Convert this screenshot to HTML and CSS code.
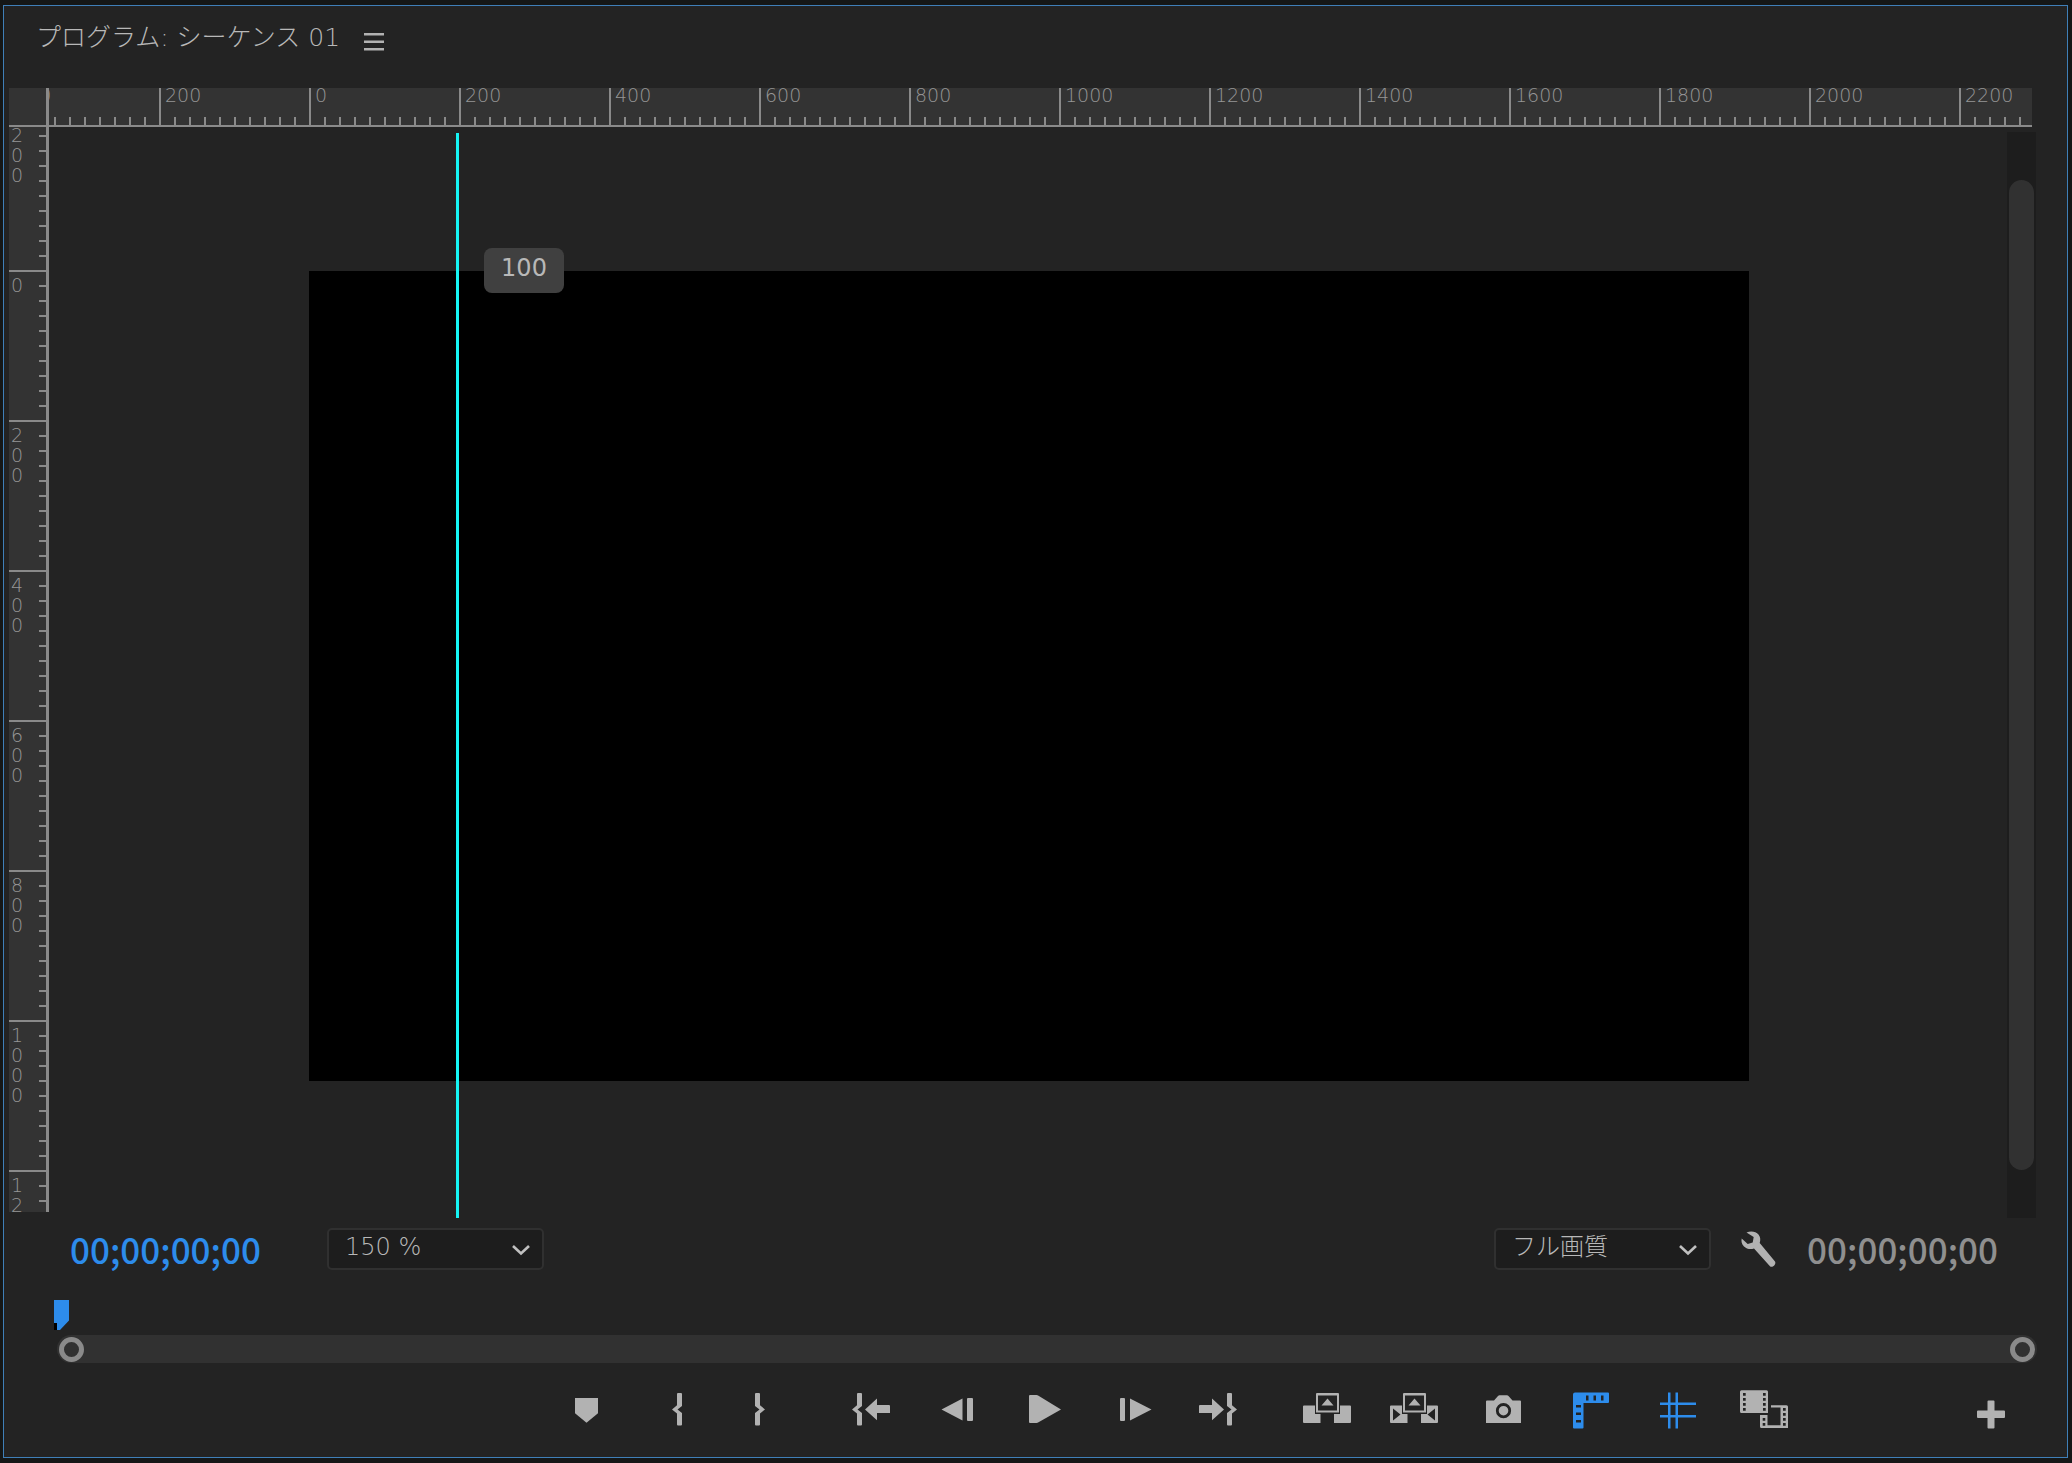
FILE: index.html
```html
<!DOCTYPE html>
<html lang="ja">
<head>
<meta charset="utf-8">
<title>プログラム: シーケンス 01</title>
<link rel="stylesheet" href="styles.css">
</head>
<body>
<main class="panel">
  <header class="panel-header">
    <h1 class="panel-title">プログラム: シーケンス 01</h1>
    <button class="icon-button menu-button" type="button" aria-label="パネルメニュー">
      <svg width="20" height="20" viewBox="0 0 20 20"><path d="M0 1h20v2.500H0zM0 8.500h20V11H0zM0 16h20v2.500H0z"/></svg>
    </button>
  </header>

  <section class="workspace">
    <div class="corner"></div>
    <div class="ruler ruler-h">
      <div class="strip strip-h">
        <span class="mark">400</span><span class="mark">200</span><span class="mark">0</span><span class="mark">200</span><span class="mark">400</span><span class="mark">600</span><span class="mark">800</span><span class="mark">1000</span><span class="mark">1200</span><span class="mark">1400</span><span class="mark">1600</span><span class="mark">1800</span><span class="mark">2000</span><span class="mark">2200</span>
      </div>
    </div>
    <div class="ruler ruler-v">
      <div class="strip strip-v">
        <span class="mark"><span class="digits">200</span></span>
        <span class="mark"><span class="digits">0</span></span>
        <span class="mark"><span class="digits">200</span></span>
        <span class="mark"><span class="digits">400</span></span>
        <span class="mark"><span class="digits">600</span></span>
        <span class="mark"><span class="digits">800</span></span>
        <span class="mark"><span class="digits">1000</span></span>
        <span class="mark"><span class="digits">1200</span></span>
      </div>
    </div>
    <div class="stage">
      <div class="frame"></div>
      <div class="guide"></div>
      <div class="guide-value">100</div>
    </div>
    <div class="scrollbar"><div class="thumb"></div></div>
  </section>

  <section class="controls">
    <input class="timecode timecode-current" type="text" value="00;00;00;00" aria-label="再生ヘッドの位置">
    <div class="dropdown">
      <select aria-label="ズームレベル"><option>150 %</option></select>
      <svg class="chevron" width="20" height="12" viewBox="0 0 20 12"><path d="M2 2l8 7.500L18 2"/></svg>
    </div>
    <div class="controls-end">
      <div class="dropdown">
        <select aria-label="再生時の解像度"><option>フル画質</option></select>
        <svg class="chevron" width="20" height="12" viewBox="0 0 20 12"><path d="M2 2l8 7.500L18 2"/></svg>
      </div>
      <button class="icon-button" type="button" aria-label="設定">
        <svg width="36" height="38" viewBox="0 0 36 38"><path d="M5.500 2.500C10 .500 15 1.500 17.500 4.500c2 2.500 2.200 5.500 1.200 8.500L34 31.500c1.500 2.500-2 6.500-4.800 5L13 18.500c-3.500 1.200-7.500.500-10-2C.800 14.200 0 11.500.700 8.500l6 5.500 5-1.500 1-5.500z"/></svg>
      </button>
      <output class="timecode" aria-label="デュレーション">00;00;00;00</output>
    </div>
  </section>

  <section class="timeline">
    <svg class="playhead" width="15" height="30" viewBox="0 0 15 30"><path class="head-shadow" d="M0 20h4v10H0z"/><path d="M0 0h15v20.500L6 30H3v-7H0z"/></svg>
    <div class="zoombar"><span class="knob"></span><span class="knob"></span></div>
  </section>

  <nav class="toolbar" aria-label="トランスポート">
    <div class="tools">
      <div class="tool-group">
        <button class="icon-button" type="button" aria-label="マーカーを追加"><svg width="48" height="42" viewBox="0 0 48 42"><path d="M10 10h23v15.300L21.500 34.700 10 25.300z"/></svg></button>
        <button class="icon-button" type="button" aria-label="インをマーク"><svg width="48" height="42" viewBox="0 0 48 42"><path d="M26 5h3q1 0 1 1v12l-4.500 3.400L30 25v11.500q0 1-1 1h-3q-1 0-1-1v-11l-5-4.100 5-4.100V6q0-1 1-1z"/></svg></button>
        <button class="icon-button" type="button" aria-label="アウトをマーク"><svg width="48" height="42" viewBox="0 0 48 42"><path d="M20 5h-3q-1 0-1 1v12l4.500 3.400L16 25v11.500q0 1 1 1h3q1 0 1-1v-11l5-4.100-5-4.100V6q0-1-1-1z"/></svg></button>
      </div>
      <div class="tool-group">
        <button class="icon-button" type="button" aria-label="インへ移動"><svg width="48" height="42" viewBox="0 0 48 42"><path d="M11 5h3q1 0 1 1v12l-4.500 3.400L15 25v11.500q0 1-1 1h-3q-1 0-1-1v-11l-5-4.100 5-4.100V6q0-1 1-1zM18 21.400L30 10.500V17h12q1 0 1 1v7H30v7.300z"/></svg></button>
        <button class="icon-button" type="button" aria-label="1フレーム前へ戻る"><svg width="48" height="42" viewBox="0 0 48 42"><path d="M7.500 21.500l21-11v22zM34 10h4q1 0 1 1v21q0 1-1 1h-4q-1 0-1-1V11q0-1 1-1z"/></svg></button>
        <button class="icon-button" type="button" aria-label="再生"><svg width="48" height="42" viewBox="0 0 48 42"><path d="M9 7h6.500q1 0 2 .700L40 21.400 17.500 34.300q-1 .700-2 .700H9q-1 0-1-1V8q0-1 1-1z"/></svg></button>
        <button class="icon-button" type="button" aria-label="1フレーム先へ進む"><svg width="48" height="42" viewBox="0 0 48 42"><path d="M43.500 21.500l-21.500-11v22zM13 10h3q1 0 1 1v21q0 1-1 1h-3q-1 0-1-1V11q0-1 1-1z"/></svg></button>
        <button class="icon-button" type="button" aria-label="アウトへ移動"><svg width="48" height="42" viewBox="0 0 48 42"><path d="M36 5h-3q-1 0-1 1v12l4.500 3.400L32 25v11.500q0 1 1 1h3q1 0 1-1v-11l5-4.100-5-4.100V6q0-1-1-1zM29 21.400L17 10.500V17H5q-1 0-1 1v7h13v7.300z"/></svg></button>
      </div>
      <div class="tool-group">
        <button class="icon-button" type="button" aria-label="リフト"><svg width="48" height="42" viewBox="0 0 48 42"><path d="M1 17.500h11V26h5.500v9H1q-1 0-1-1V18.500q0-1 1-1zM47 17.500H37V26h-6v9h16q1 0 1-1V18.500q0-1-1-1z"/><path fill-rule="evenodd" d="M14 5h21q1 0 1 1v18.500H13V6q0-1 1-1zM15 7.500v15h19v-15zM18.500 17.500l6-7 6 7z"/></svg></button>
        <button class="icon-button" type="button" aria-label="抽出"><svg width="48" height="42" viewBox="0 0 48 42"><path fill-rule="evenodd" d="M1 17.500h11V26h5.500v9H1q-1 0-1-1V18.500q0-1 1-1zM3 20.500v12l7.500-6zM47 17.500H37V26h-6v9h16q1 0 1-1V18.500q0-1-1-1zM45 20.500v12l-7.500-6z"/><path fill-rule="evenodd" d="M14 5h21q1 0 1 1v18.500H13V6q0-1 1-1zM15 7.500v15h19v-15zM18.500 17.500l6-7 6 7z"/></svg></button>
        <button class="icon-button" type="button" aria-label="フレームを書き出し"><svg width="48" height="42" viewBox="0 0 48 42"><path d="M10 12.500h7l4-4.500q.700-.800 1.500-.800h7.500q.800 0 1.500.800l4 4.500H43q1 0 1 1V35H9V13.500q0-1 1-1z"/><circle class="cutout" cx="26.500" cy="22.700" r="6.200"/></svg></button>
        <button class="icon-button active" type="button" aria-label="定規を表示" aria-pressed="true"><svg width="48" height="42" viewBox="0 0 48 42"><path fill-rule="evenodd" d="M11 4.500h33q1 0 1 1V14q0 1-1 1H19.500v24.500q0 1-1 1H10q-1 0-1-1v-33q0-2 2-2zM22 7.500v5h2.500v-5zM29.500 7.500v5H32v-5zM37 7.500v5h2.500v-5zM12 17v2.500h5V17zM12 24.500V27h5v-2.500zM12 32v2.500h5V32z"/></svg></button>
        <button class="icon-button active" type="button" aria-label="ガイドを表示" aria-pressed="true"><svg width="48" height="42" viewBox="0 0 48 42"><path d="M17 4.500h2.500v36H17zM24.500 4.500H27v36h-2.500zM9 14.500h36V17H9zM9 27h36v2.500H9z"/></svg></button>
        <button class="icon-button" type="button" aria-label="プロキシの切り替え"><svg width="48" height="42" viewBox="0 0 48 42"><path fill-rule="evenodd" d="M3.500 2.200h25q1.500 0 1.500 1.500V25H3.500Q2 25 2 23.500V3.700q0-1.500 1.500-1.500zM5 5v2.700h2.700V5zM5 10v2.700h2.700V10zM5 15v2.700h2.700V15zM5 20v2.700h2.700V20zM25 5v2.700h2.700V5zM25 10v2.700h2.700V10zM25 15v2.700h2.700V15zM25 20v2.700h2.700V20zM33 17.200h15.500q1.500 0 1.500 1.500V40H23.500Q22 40 22 38.500V27h7.500v10.300h13V19.500H33zM45 20v2.700h2.700V20zM45 25v2.700h2.700V25zM45 30v2.700h2.700V30zM45 35v2.700h2.700V35zM24.700 30v2.700h2.600V30zM24.700 35v2.700h2.600V35z"/></svg></button>
      </div>
    </div>
    <button class="icon-button add-button" type="button" aria-label="ボタンエディター"><svg width="48" height="42" viewBox="0 0 48 42"><path d="M21.500 12.500h5q1 0 1 1v9H37q1 0 1 1v5.500q0 1-1 1h-9.500v9.500q0 1-1 1h-5q-1 0-1-1V30H11q-1 0-1-1v-5.500q0-1 1-1h9.500v-9q0-1 1-1z"/></svg></button>
  </nav>
</main>
</body>
</html>
```

FILE: styles.css
```css
:root {
  --panel: #232323;
  --ruler: #333333;
  --tick: #8a8a8a;
  --text: #b8b8b8;
  --icon: #b2b2b2;
  --blue: #2d8ceb;
}

* { box-sizing: border-box; }

body {
  margin: 0;
  min-height: 100vh;
  padding: 5px 4px 5px 3px;
  display: flex;
  background: #151717;
  color: var(--text);
  font-family: "DejaVu Sans", "Noto Sans CJK JP", sans-serif;
  font-size: 24px;
}

button, input, select { font: inherit; color: inherit; }
svg { display: block; fill: var(--icon); overflow: visible; }

.panel {
  flex: 1;
  min-width: 0;
  display: flex;
  flex-direction: column;
  background: var(--panel);
  border: 1px solid #3f7fb8;
}

.panel-header {
  height: 82px;
  padding: 12px 32px;
  display: flex;
  align-items: flex-start;
  gap: 24px;
}
.panel-title {
  margin: 0;
  font-size: 25px;
  line-height: 40px;
  font-weight: 200;
  font-family: "DejaVu Sans", "Noto Sans CJK JP", sans-serif;
}

.icon-button {
  padding: 0;
  border: 0;
  background: none;
}
.menu-button { margin-top: 14px; }
.active svg { fill: var(--blue); }
.cutout { fill: none; stroke: var(--panel); stroke-width: 2.8; }

/* Rulers and canvas */
.workspace {
  flex: 1;
  display: grid;
  grid-template: 39px 1fr / 40px 1fr 29px;
  padding: 0 31px 0 5px;
}
.corner {
  background: linear-gradient(var(--tick), var(--tick)) bottom / 100% 2px no-repeat var(--ruler);
  border-right: 3px solid var(--tick);
}
.ruler {
  overflow: hidden;
  background: var(--ruler);
  color: #969696;
  font-size: 19px;
  line-height: 20px;
  font-weight: 200;
}
.ruler-h {
  grid-column: 2 / 4;
  margin-right: 4px;
  border-bottom: 2px solid var(--tick);
}
.ruler-v {
  height: 0;
  min-height: 100%;
  border-right: 3px solid var(--tick);
  contain: size;
  margin-bottom: 6px;
  min-height: calc(100% - 6px);
}
.strip { display: flex; }
.strip-h {
  height: 100%;
  margin-left: -40px;
  background: repeating-linear-gradient(to right, var(--tick) 0 2px, transparent 2px 15px) bottom / 100% 8px no-repeat;
}
.strip-h .mark {
  flex: 0 0 150px;
  border-left: 2px solid var(--tick);
  padding-left: 4px;
  line-height: 14px;
}
.strip-v {
  flex-direction: column;
  margin-top: -7px;
  background: repeating-linear-gradient(to bottom, var(--tick) 0 2px, transparent 2px 15px) right / 7px 100% no-repeat;
}
.strip-v .mark {
  flex: 0 0 150px;
  border-top: 2px solid var(--tick);
  padding: 3px 2px;
}
.digits {
  display: block;
  width: 13px;
  word-break: break-all;
}

.stage {
  position: relative;
  overflow: hidden;
  padding: 144px 0 0 260px;
}
.frame {
  width: 1440px;
  height: 810px;
  background: #000;
}
.guide {
  position: absolute;
  left: 407px;
  top: 6px;
  bottom: 0;
  width: 3px;
  background: #15f4f4;
}
.guide-value {
  position: absolute;
  left: 435px;
  top: 121px;
  width: 80px;
  height: 45px;
  border-radius: 8px;
  background: #404040;
  line-height: 41px;
  text-align: center;
}
.scrollbar {
  margin-top: 5px;
  padding: 48px 2px;
  background: #1d1d1d;
}
.thumb {
  height: 100%;
  border-radius: 13px;
  background: #313131;
}

/* Timecodes and drop-downs */
.controls {
  display: flex;
  align-items: center;
  height: 62px;
  padding: 0 69px 0 66px;
}
.timecode {
  font-family: "Noto Sans CJK JP", sans-serif;
  font-size: 35px;
  font-weight: 500;
  line-height: 48px;
  color: #8f8f8f;
}
.timecode-current {
  width: 257px;
  padding: 0;
  border: 0;
  background: none;
  color: var(--blue);
}
.dropdown { position: relative; }
.dropdown select {
  display: block;
  appearance: none;
  width: 217px;
  height: 42px;
  padding: 0 16px 4px;
  border: 2px solid #303030;
  border-radius: 5px;
  background: #1d1d1d;
  font-weight: 200;
}
.chevron {
  position: absolute;
  right: 13px;
  top: 16px;
  fill: none;
  stroke: #c0c0c0;
  stroke-width: 2.6;
  pointer-events: none;
}
.controls-end {
  margin-left: auto;
  display: flex;
  align-items: center;
  gap: 30px;
}

/* Scrubber */
.timeline { padding: 20px 30px 0 50px; }
.zoombar {
  display: flex;
  justify-content: space-between;
  align-items: center;
  height: 28px;
  margin: 5px 0 0 3px;
  padding: 0 2px;
  border-radius: 14px;
  background: #313131;
}
.knob {
  width: 25px;
  height: 25px;
  border: 5px solid var(--tick);
  border-radius: 50%;
}
.playhead { fill: var(--blue); }
.head-shadow { fill: #000; }

/* Transport buttons */
.toolbar {
  display: grid;
  grid-template-columns: 2fr auto 1fr;
  padding: 25px 0 27px;
}
.tools {
  grid-column: 2;
  display: flex;
  gap: 60px;
}
.tool-group { display: flex; gap: 39px; }
.add-button { justify-self: end; margin-right: 52px; }
```
